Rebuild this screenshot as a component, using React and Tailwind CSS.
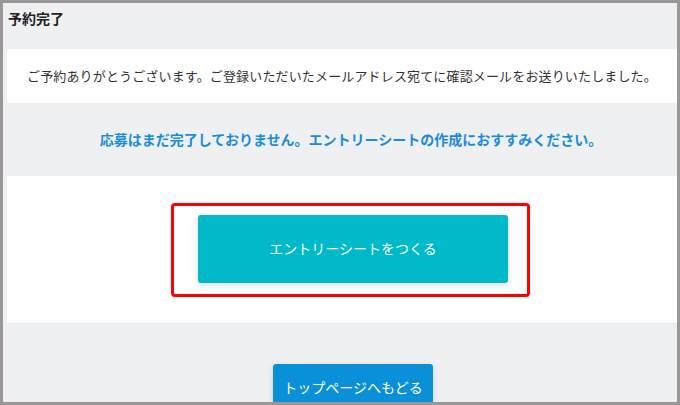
export default function App() {
    return (
        <div className="w-[680px] h-[405px] border-[3px] border-[#9b9798] bg-[#eff0f2] overflow-hidden box-border font-['Noto_Sans_CJK_JP','Noto_Sans',sans-serif]">
            {/* Heading */}
            <h1 className="pt-[6px] pl-[5px] text-[14px] leading-[19px] font-bold text-[#222]">予約完了</h1>

            {/* Thanks card */}
            <div className="mt-[21px] ml-[4px] h-[54px] bg-white rounded-l-[4px] flex items-center pl-[20px]">
                <p className="text-[13px] text-[#333] tracking-[0.15px]">
                    ご予約ありがとうございます。ご登録いただいたメールアドレス宛てに確認メールをお送りいたしました。
                </p>
            </div>

            {/* Notice */}
            <div className="h-[73px] flex items-center justify-center pl-[22px]">
                <p className="text-[14px] font-bold text-[#1a8cdb]">
                    応募はまだ完了しておりません。エントリーシートの作成におすすみください。
                </p>
            </div>

            {/* Entry sheet section */}
            <div className="ml-[4px] h-[147px] bg-white flex items-center justify-center pl-[17px] shadow-[0_1px_1px_rgba(0,0,0,0.03)]">
                <div className="w-[359px] h-[94px] border-[3px] border-[#ff0000] rounded-[4px] pl-[24px] pt-[9px]">
                    <button className="w-[310px] h-[68px] rounded-[3px] bg-[#00b9c9] text-white text-[14px] shadow-[0_2px_6px_rgba(0,0,0,0.15)]">
                        エントリーシートをつくる
                    </button>
                </div>
            </div>

            {/* Back to top */}
            <div className="mt-[41px] flex justify-center pl-[26px]">
                <button className="w-[160px] h-[46px] rounded-[3px] bg-[#0a90d8] text-white text-[14px] shadow-[0_2px_6px_rgba(0,0,0,0.12)]">
                    トップページへもどる
                </button>
            </div>
        </div>
    );
}
